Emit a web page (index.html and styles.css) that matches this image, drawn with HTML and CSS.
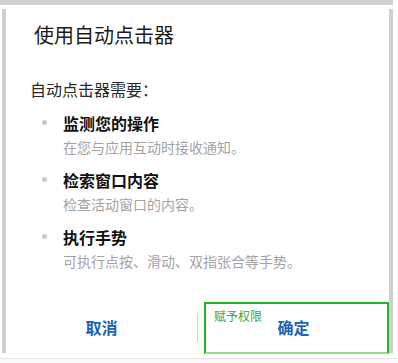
FILE: index.html
```html
<!DOCTYPE html>
<html lang="zh-CN">
<head>
    <meta charset="UTF-8">
    <meta name="viewport" content="width=device-width, initial-scale=1.0">
    <title>使用自动点击器</title>
    <link rel="stylesheet" href="styles.css">
</head>
<body>
    <div class="top-band"></div>

    <div class="dialog">
        <h1 class="dialog-title">使用自动点击器</h1>
        <p class="dialog-intro">自动点击器需要：</p>

        <ul class="perm-list">
            <li class="perm-item">
                <div class="perm-name">监测您的操作</div>
                <div class="perm-desc">在您与应用互动时接收通知。</div>
            </li>
            <li class="perm-item">
                <div class="perm-name">检索窗口内容</div>
                <div class="perm-desc">检查活动窗口的内容。</div>
            </li>
            <li class="perm-item">
                <div class="perm-name">执行手势</div>
                <div class="perm-desc">可执行点按、滑动、双指张合等手势。</div>
            </li>
        </ul>

        <div class="dialog-actions">
            <button class="action-btn">取消</button>
            <span class="action-divider"></span>
            <button class="action-btn">确定</button>
            <!-- 标注框 -->
            <div class="hint-box">
                <span class="hint-label">赋予权限</span>
            </div>
        </div>
    </div>

    <div class="bottom-band"></div>
</body>
</html>
```

FILE: styles.css
```css
:root {
    --frame-gray: #cfcfcf;
    --text-main: #1f1f1f;
    --text-sub: #a3a3a3;
    --btn-blue: #1a62b5;
    --hint-green: #22b422;
}

* {
    box-sizing: border-box;
    margin: 0;
    padding: 0;
}

body {
    background: #ffffff;
    font-family: 'Noto Sans CJK SC', 'Noto Sans', sans-serif;
    color: var(--text-main);
    width: 398px;
    height: 363px;
    overflow: hidden;
}

.top-band {
    width: 393px;
    height: 5px;
    background: var(--frame-gray);
}

.dialog {
    margin: 4px 0 0 2px;
    width: 391px;
    height: 344px;
    border-left: 4px solid var(--frame-gray);
    border-right: 4px solid var(--frame-gray);
    padding-top: 13px;
    display: flex;
    flex-direction: column;
}

.dialog-title {
    font-size: 20px;
    font-weight: 400;
    line-height: 26px;
    padding-left: 28px;
    color: #1c1c1c;
}

.dialog-intro {
    margin-top: 31px;
    font-size: 16px;
    line-height: 20px;
    padding-left: 24px;
    color: #2a2a2a;
}

.perm-list {
    list-style: none;
    margin-top: 14px;
    padding-left: 57px;
}

.perm-item {
    position: relative;
    height: 57px;
}

.perm-item::before {
    content: '';
    position: absolute;
    left: -21px;
    top: 7px;
    width: 5px;
    height: 5px;
    border-radius: 50%;
    background: #c8c8c8;
}

.perm-name {
    font-size: 16px;
    font-weight: 700;
    line-height: 20px;
    color: #111111;
}

.perm-desc {
    margin-top: 5px;
    font-size: 14px;
    line-height: 18px;
    color: var(--text-sub);
}

.dialog-actions {
    margin-top: auto;
    height: 51px;
    display: flex;
    align-items: center;
    position: relative;
}

.action-btn {
    flex: 1;
    height: 100%;
    border: none;
    background: none;
    font-family: inherit;
    font-size: 16px;
    font-weight: 700;
    color: var(--btn-blue);
    padding-bottom: 2px;
}

.action-divider {
    width: 1px;
    height: 29px;
    background: #d6d6d6;
}

.hint-box {
    position: absolute;
    left: 198px;
    right: 0;
    top: 0;
    bottom: -1px;
    border: 2px solid var(--hint-green);
    border-bottom-color: #8fdc8f;
    padding: 5px 0 0 8px;
    pointer-events: none;
}

.hint-label {
    font-size: 12px;
    line-height: 14px;
    color: #3aa83a;
    display: block;
}

.bottom-band {
    margin-top: 5px;
    height: 10px;
    border-top: 1px solid #e6e6e6;
    background: #f9f9f9;
}
```
